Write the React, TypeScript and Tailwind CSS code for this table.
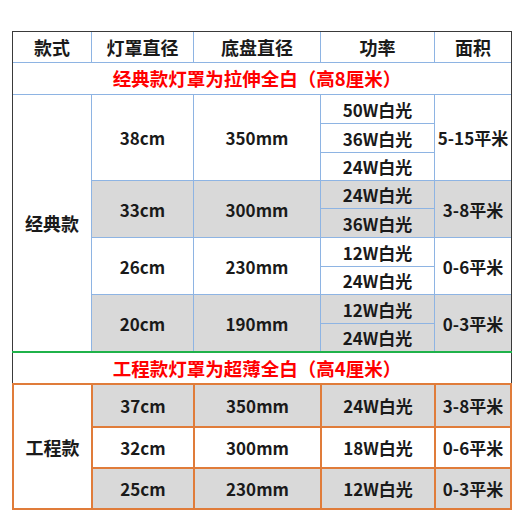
import React from "react";

const font = { fontFamily: '"Noto Sans CJK SC", "Noto Sans", sans-serif' };

function Cell({ children, className = "" }: { children?: React.ReactNode; className?: string }) {
  return (
    <div className={`flex items-center justify-center text-[17px] font-bold text-[#1a1a1a] leading-none ${className}`}>
      {children}
    </div>
  );
}

export default function App() {
  const W = "bg-white";
  const G = "bg-[#d9d9d9]";
  return (
    <div className="w-[520px] h-[520px] bg-white" style={font}>
      <div className="pt-[31px] pl-[12px] w-[512px]">
        {/* classic block */}
        <div className="border-l border-t border-r border-[#3a3a3a]">
          <div className="grid grid-cols-[78px_101px_126px_113px_76px] grid-rows-[30px_31px_28px_28px_27px_27px_28px_28px_27px_28px_27px] gap-px bg-[#8eb4e3]">
            <Cell className={`${W} text-[18px]`}>款式</Cell>
            <Cell className={`${W} text-[18px]`}>灯罩直径</Cell>
            <Cell className={`${W} text-[18px]`}>底盘直径</Cell>
            <Cell className={`${W} text-[18px]`}>功率</Cell>
            <Cell className={`${W} text-[18px]`}>面积</Cell>

            <Cell className={`${W} col-span-5 text-[18.5px] !text-[#ff0000] pl-[2px] pr-[12px]`}>经典款灯罩为拉伸全白（高8厘米）</Cell>

            <Cell className={`${W} row-span-9 text-[18px]`}>经典款</Cell>
            <Cell className={`${W} row-span-3`}>38cm</Cell>
            <Cell className={`${W} row-span-3`}>350mm</Cell>
            <Cell className={W}>50W白光</Cell>
            <Cell className={`${W} row-span-3`}>5-15平米</Cell>
            <Cell className={W}>36W白光</Cell>
            <Cell className={W}>24W白光</Cell>

            <Cell className={`${G} row-span-2`}>33cm</Cell>
            <Cell className={`${G} row-span-2`}>300mm</Cell>
            <Cell className={G}>24W白光</Cell>
            <Cell className={`${G} row-span-2`}>3-8平米</Cell>
            <Cell className={G}>36W白光</Cell>

            <Cell className={`${W} row-span-2`}>26cm</Cell>
            <Cell className={`${W} row-span-2`}>230mm</Cell>
            <Cell className={W}>12W白光</Cell>
            <Cell className={`${W} row-span-2`}>0-6平米</Cell>
            <Cell className={W}>24W白光</Cell>

            <Cell className={`${G} row-span-2`}>20cm</Cell>
            <Cell className={`${G} row-span-2`}>190mm</Cell>
            <Cell className={G}>12W白光</Cell>
            <Cell className={`${G} row-span-2`}>0-3平米</Cell>
            <Cell className={G}>24W白光</Cell>
          </div>
        </div>
        <div className="h-[2px] bg-[#1fb24a]" />
        <div className="h-[30px] border-l border-r border-[#3a3a3a] flex items-center justify-center pl-[2px] pr-[12px] text-[18.5px] font-bold text-[#ff0000] leading-none">
          工程款灯罩为超薄全白（高4厘米）
        </div>
        <div className="border-2 border-[#e07c3a]">
          <div className="grid grid-cols-[77px_100px_125px_112px_74px] grid-rows-[41px_39px_39px] gap-[2px] bg-[#e07c3a]">
            <Cell className={`${W} row-span-3 text-[18px]`}>工程款</Cell>
            <Cell className={G}>37cm</Cell>
            <Cell className={G}>350mm</Cell>
            <Cell className={G}>24W白光</Cell>
            <Cell className={G}>3-8平米</Cell>
            <Cell className={W}>32cm</Cell>
            <Cell className={W}>300mm</Cell>
            <Cell className={W}>18W白光</Cell>
            <Cell className={W}>0-6平米</Cell>
            <Cell className={G}>25cm</Cell>
            <Cell className={G}>230mm</Cell>
            <Cell className={G}>12W白光</Cell>
            <Cell className={G}>0-3平米</Cell>
          </div>
        </div>
      </div>
    </div>
  );
}
